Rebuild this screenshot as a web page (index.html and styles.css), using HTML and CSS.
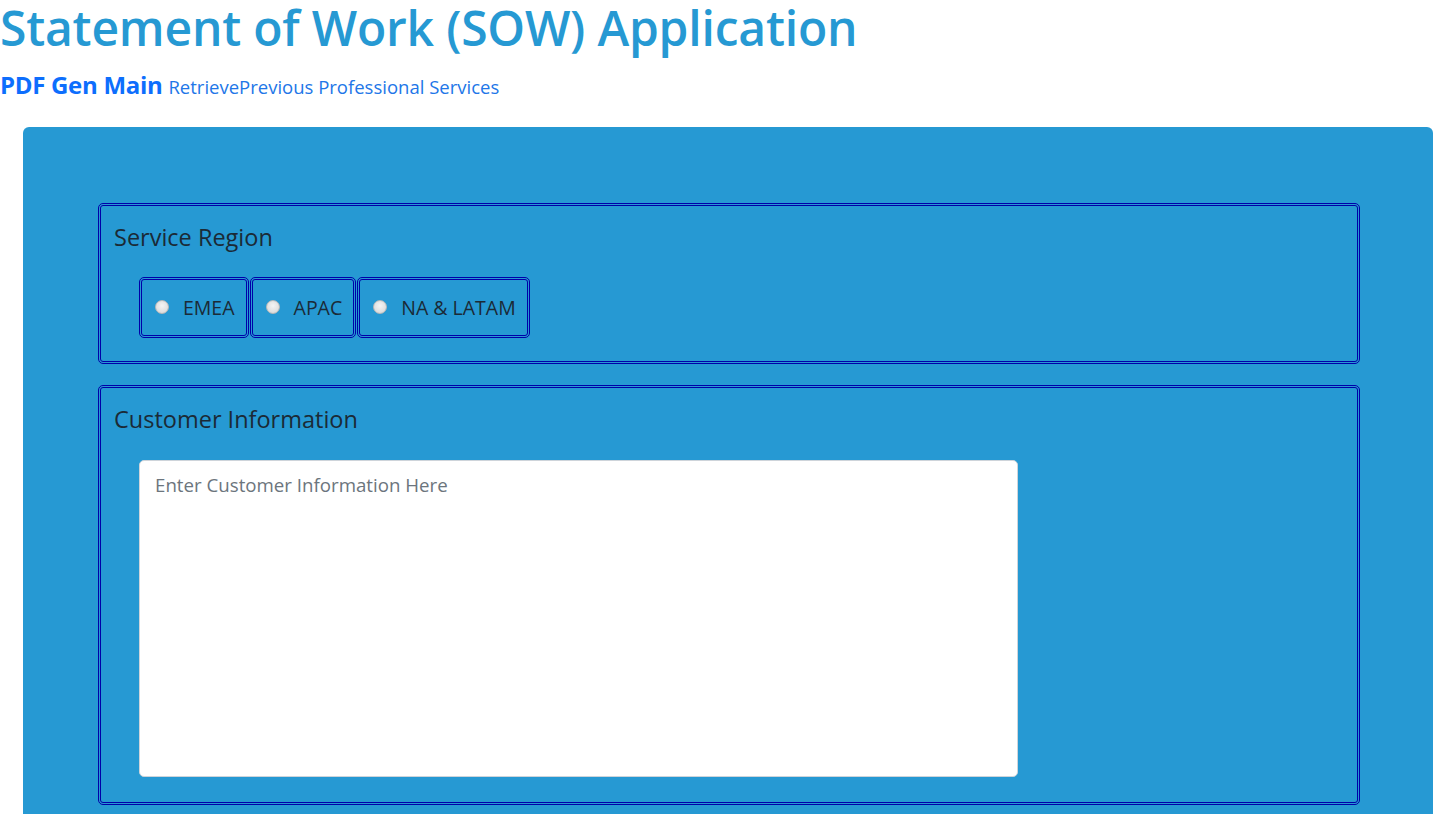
FILE: index.html
```html
<!DOCTYPE html>
<html lang="en">
<head>
<meta charset="utf-8">
<title>Statement of Work (SOW) Application</title>
<link rel="stylesheet" href="styles.css">
</head>
<body>
<h1 class="title">Statement of Work (SOW) Application</h1>
<nav class="nav">
  <a class="brand" href="#">PDF Gen Main</a>
  <a class="link" href="#">Retrieve</a><a class="link" href="#">Previous Professional Services</a>
</nav>
<main class="panel">
  <fieldset class="group">
    <legend class="legend">Service Region</legend>
    <div class="radios">
      <label class="radio-box"><input type="radio" name="region" class="radio"><span>EMEA</span></label>
      <label class="radio-box"><input type="radio" name="region" class="radio"><span>APAC</span></label>
      <label class="radio-box"><input type="radio" name="region" class="radio"><span>NA &amp; LATAM</span></label>
    </div>
  </fieldset>
  <fieldset class="group group-customer">
    <legend class="legend">Customer Information</legend>
    <div class="customer-wrap">
      <textarea class="customer" placeholder="Enter Customer Information Here"></textarea>
    </div>
  </fieldset>
</main>
</body>
</html>
```

FILE: styles.css
```css
* { box-sizing: border-box; }
html, body { margin: 0; padding: 0; }
body {
  font-family: "Open Sans", "Noto Sans", sans-serif;
  color: #212529;
  background: #fff;
  overflow: hidden;
  width: 1433px;
  height: 814px;
}
.title {
  margin: 0;
  font-size: 48px;
  font-weight: 600;
  line-height: 56px;
  color: #2699d3;
  letter-spacing: -0.2px;
}
.nav {
  display: flex;
  align-items: baseline;
  height: 64px;
  padding-top: 12px;
}
.brand {
  font-size: 24px;
  font-weight: 700;
  color: #0d6efd;
  text-decoration: none;
  margin-right: 6px;
  letter-spacing: -0.3px;
}
.link {
  font-size: 18.5px;
  color: #2176e8;
  text-decoration: none;
}
.panel {
  margin-left: 23px;
  margin-top: 7px;
  background: #2699d3;
  border-radius: 6px 6px 0 0;
  padding: 76px 73px 40px 75px;
  display: flex;
  flex-direction: column;
  gap: 21px;
  min-height: 700px;
}
.group {
  margin: 0;
  border: 3px double #0000a8;
  border-radius: 5px;
  padding: 0 13px 23px 13px;
  min-width: 0;
}
.legend {
  float: left;
  width: 100%;
  padding: 14px 0 0 0;
  margin: 0;
  font-size: 23.5px;
  line-height: 34px;
  color: #1b2a36;
  font-weight: 400;
}
.radios {
  clear: both;
  display: flex;
  gap: 1px;
  padding: 23px 0 0 25px;
}
.radio-box {
  display: flex;
  align-items: center;
  height: 61px;
  padding: 0 11px 0 13px;
  border: 3px double #0000a8;
  border-radius: 5px;
  font-size: 19.5px;
  color: #1b2a36;
}
.radio {
  -webkit-appearance: none;
  appearance: none;
  width: 14px;
  height: 14px;
  margin: 0 14px 1px 0;
  border-radius: 50%;
  border: 1px solid #b9b9b9;
  background: radial-gradient(circle at 50% 40%, #f4f4f4 0%, #dedede 70%, #cfcfcf 100%);
}
.group-customer { padding-bottom: 25px; }
.customer-wrap {
  clear: both;
  padding: 24px 0 0 25px;
}
.customer {
  display: block;
  margin: 0;
  width: 879px;
  height: 317px;
  border: 1px solid #ced4da;
  border-radius: 5px;
  background: #fff;
  padding: 11px 15px;
  font-family: "Open Sans", "Noto Sans", sans-serif;
  font-size: 18.7px;
  resize: none;
  color: #495057;
}
.customer::placeholder { color: #6c757d; }
```
